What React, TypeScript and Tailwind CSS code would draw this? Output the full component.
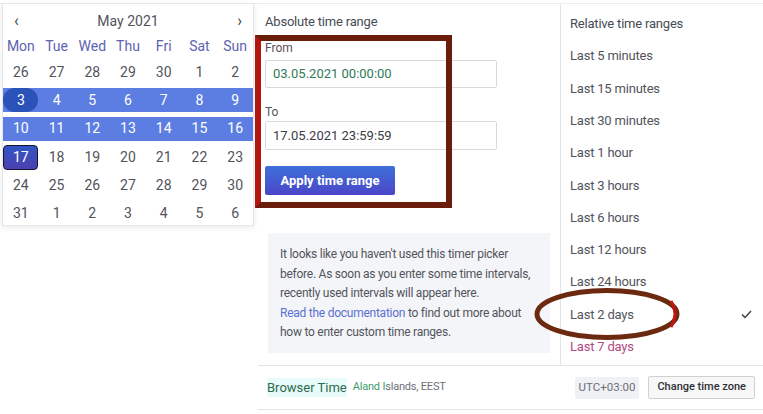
import React from 'react'

const WEEKDAYS = ['Mon', 'Tue', 'Wed', 'Thu', 'Fri', 'Sat', 'Sun']

const WEEKS: number[][] = [
  [26, 27, 28, 29, 30, 1, 2],
  [3, 4, 5, 6, 7, 8, 9],
  [10, 11, 12, 13, 14, 15, 16],
  [17, 18, 19, 20, 21, 22, 23],
  [24, 25, 26, 27, 28, 29, 30],
  [31, 1, 2, 3, 4, 5, 6],
]

const RANGES = [
  'Last 5 minutes',
  'Last 15 minutes',
  'Last 30 minutes',
  'Last 1 hour',
  'Last 3 hours',
  'Last 6 hours',
  'Last 12 hours',
  'Last 24 hours',
  'Last 2 days',
  'Last 7 days',
]

const Calendar: React.FC = () => (
  <div className="ml-[2px] w-[252px] h-[223px] bg-white border border-[#e6e6ec] shadow-[0_2px_6px_rgba(0,0,0,0.08)] text-[14px] text-[#52545c]">
    {/* Header */}
    <div className="flex items-center justify-between h-[32px] px-[11px] pt-[2px]">
      <span className="text-[16px] leading-none text-[#3b3d44]">‹</span>
      <span>May 2021</span>
      <span className="text-[16px] leading-none text-[#3b3d44]">›</span>
    </div>

    {/* Weekdays */}
    <div className="grid grid-cols-7 h-[20px] items-center text-[#5e63b0]">
      {WEEKDAYS.map(d => (
        <div key={d} className="text-center">{d}</div>
      ))}
    </div>

    {/* Dates */}
    <div className="mt-[2px]">
      {WEEKS.map((week, wi) => {
        const band = wi === 1 || wi === 2
        return (
          <div key={wi} className="h-[28.3px] flex items-center">
            <div className={`grid grid-cols-7 w-full h-[24px] items-center ${band ? 'bg-[#5c7ee2]' : ''}`}>
              {week.map((d, di) => {
                if (wi === 1 && di === 0) {
                  return (
                    <div key={di} className="flex justify-center">
                      <span className="w-[35px] h-[24px] rounded-full bg-[#2b52b8] text-white flex items-center justify-center">{d}</span>
                    </div>
                  )
                }
                if (wi === 3 && di === 0) {
                  return (
                    <div key={di} className="flex justify-center">
                      <span className="w-[35px] h-[25px] rounded-[4px] border-[1.5px] border-[#14162a] bg-gradient-to-b from-[#2f55c4] to-[#4a3fb0] text-white flex items-center justify-center">{d}</span>
                    </div>
                  )
                }
                return (
                  <div key={di} className={`text-center ${band ? 'text-white' : ''}`}>{d}</div>
                )
              })}
            </div>
          </div>
        )
      })}
    </div>
  </div>
)

const App: React.FC = () => {
  return (
    <div className="relative w-[763px] h-[414px] bg-white overflow-hidden pt-[3px] font-['Roboto',sans-serif]">
      <div className="flex h-[362px] border-t border-[#ececef]">
        {/* Calendar column */}
        <div className="w-[255px] -mt-[1px]">
          <Calendar />
        </div>

        {/* Absolute range */}
        <div className="w-[306px] border-r border-[#e4e5e8] pl-[10px]">
          <div className="mt-[8px] text-[13px] tracking-[-0.2px] leading-[20px] text-[#464c54]">Absolute time range</div>

          <div className="mt-[8px] text-[12px] leading-[16px] text-[#5b4d58]">From</div>
          <div className="mt-[4px] w-[232px] h-[28px] border border-[#d8d9dd] rounded-[2px] flex items-center pl-[7px] text-[13px] text-[#2f7a58]">
            03.05.2021 00:00:00
          </div>

          <div className="mt-[16px] text-[12px] leading-[16px] text-[#52545c]">To</div>
          <div className="mt-[1px] w-[232px] h-[29px] border border-[#d8d9dd] rounded-[2px] flex items-center pl-[7px] text-[13px] text-[#3b3d44]">
            17.05.2021 23:59:59
          </div>

          <button className="mt-[16px] w-[130px] h-[29px] rounded-[2px] bg-gradient-to-b from-[#3d6fd8] to-[#4a45c8] text-white text-[13px] font-bold">
            Apply time range
          </button>

          <div className="mt-[38px] ml-[3px] w-[282px] h-[120px] bg-[#f4f5f8] pl-[12px] pt-[12px] text-[12px] tracking-[-0.25px] leading-[19.5px] text-[#52545c] whitespace-nowrap">
            It looks like you haven't used this timer picker
            <br />
            before. As soon as you enter some time intervals,
            <br />
            recently used intervals will appear here.
            <br />
            <span className="text-[#5b6fd0]">Read the documentation</span> to find out more about
            <br />
            how to enter custom time ranges.
          </div>
        </div>

        {/* Relative ranges */}
        <div className="flex-1 pl-[9px] pr-[10px] pt-[10px]">
          <div className="text-[13px] tracking-[-0.2px] leading-[20px] text-[#464c54]">Relative time ranges</div>
          <div className="mt-[6px]">
            {RANGES.map(r => (
              <div
                key={r}
                className={`h-[32.3px] flex items-center justify-between text-[13px] tracking-[-0.2px] ${r === 'Last 7 days' ? 'text-[#b04a7f]' : 'text-[#52545c]'}`}
              >
                <span>{r}</span>
                {r === 'Last 2 days' && (
                  <svg width="11" height="9" viewBox="0 0 11 9" className="mr-[1px]">
                    <path d="M1 4.5 L4 7.5 L10 1" fill="none" stroke="#3b3d44" strokeWidth="1.4" />
                  </svg>
                )}
              </div>
            ))}
          </div>
        </div>
      </div>

      {/* Footer */}
      <div className="ml-[258px] h-[45px] border-t border-b border-[#e4e5e8] flex items-center pl-[9px] pr-[8px]">
        <span className="text-[13px] text-[#2b6a4c] bg-[#e8fbfa]">Browser Time</span>
        <span className="ml-[6px] text-[11px] tracking-[-0.2px] text-[#6c6f76]">
          <span className="text-[#3d9b6e]">Aland I</span>slands, EEST
        </span>
        <div className="ml-auto flex items-center gap-[9px]">
          <span className="h-[22px] px-[4px] bg-[#f0f1f4] rounded-[2px] text-[11.5px] text-[#6c6f76] flex items-center">UTC+03:00</span>
          <button className="h-[23px] px-[8px] border border-[#cfd0d4] rounded-[2px] bg-[#f7f7f8] text-[11px] font-medium text-[#2e3036]">
            Change time zone
          </button>
        </div>
      </div>

      {/* Annotations */}
      <div className="absolute left-[255px] top-[35px] w-[197px] h-[173px] border-[6px] border-[#6b1d0c] border-l-[#b3150f]" />
      <svg className="absolute left-[533px] top-[287px]" width="148" height="54" viewBox="0 0 148 54">
        <ellipse cx="74" cy="27" rx="70" ry="23.5" fill="none" stroke="#6b2a10" strokeWidth="5" />
        <path d="M138 14 Q146 27 138 40" fill="none" stroke="#c0160f" strokeWidth="3" />
      </svg>
    </div>
  )
}

export default App
